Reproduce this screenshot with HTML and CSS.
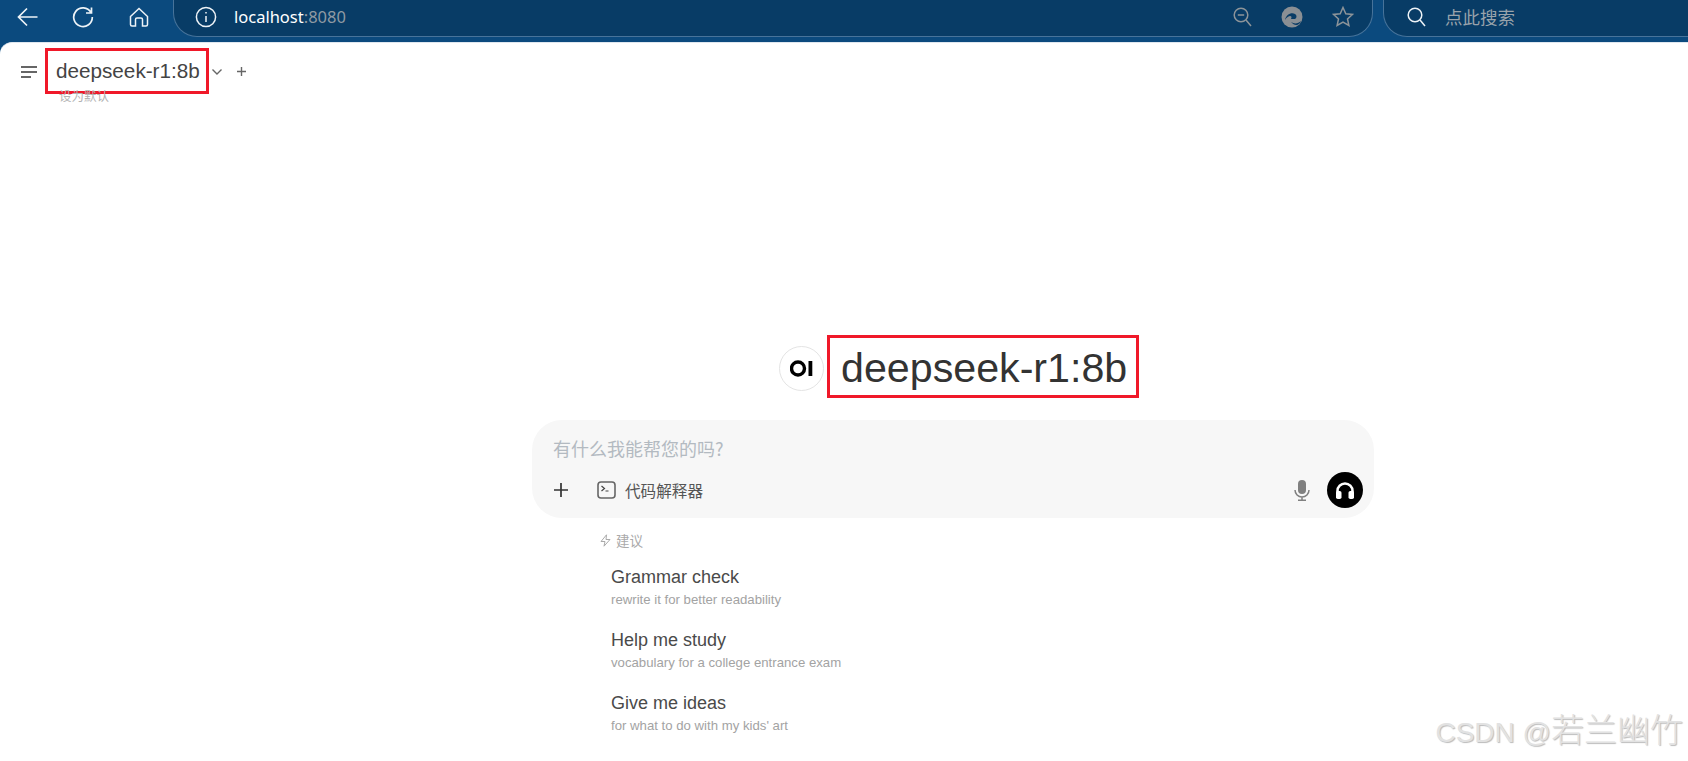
FILE: index.html
```html
<!DOCTYPE html>
<html lang="zh">
<head>
<meta charset="utf-8">
<title>Open WebUI</title>
<link rel="stylesheet" href="styles.css">
</head>
<body>
<div class="toolbar">
  <button class="tb-btn back"><svg width="22" height="20" viewBox="0 0 22 20"><path d="M20.500 10H1.500M10 1.500 1.500 10l8.500 8.500" class="line-w"/></svg></button>
  <button class="tb-btn reload"><svg width="22" height="22" viewBox="0 0 22 22"><path d="M19 6.500A9.300 9.300 0 1 0 20.300 11M19.500 1.500v5.500H14" class="line-w"/></svg></button>
  <button class="tb-btn home"><svg width="20" height="20" viewBox="0 0 20 20"><path d="M1.500 9.500 10 1.500l8.500 8v8a1.500 1.500 0 0 1-1.500 1.500h-3.500v-6.500a1.500 1.500 0 0 0-1.500-1.500H8a1.500 1.500 0 0 0-1.500 1.500V19H3a1.500 1.500 0 0 1-1.500-1.500z" class="line-w thin"/></svg></button>
  <div class="addr">
    <svg class="info" width="22" height="22" viewBox="0 0 22 22"><circle cx="11" cy="11" r="9.600" class="line-w thin"/><path d="M11 10v6M11 6v1.600" class="line-w thin"/></svg>
    <span class="url">localhost<span class="port">:8080</span></span>
    <span class="addr-icons">
      <svg width="19" height="20" viewBox="0 0 19 20"><circle cx="8" cy="8" r="6.800" class="line-g"/><path d="M4.800 8h6.400M13 13l5 6" class="line-g"/></svg>
      <svg width="22" height="22" viewBox="0 0 22 22"><circle cx="11" cy="11" r="10.500" fill="#8a8f94"/><path d="M4 14c1-5 6-8 10-6 2 1 2 4 0 5h-4c2-3-2-5-6 1zM10 16c3 2 7 2 10-1-1 4-6 6-10 1z" fill="#0a3c66"/></svg>
      <svg width="22" height="21" viewBox="0 0 22 21"><path d="M11 1.500l2.800 6.200 6.700.7-5 4.500 1.400 6.600L11 16.100l-5.900 3.400 1.400-6.600-5-4.500 6.700-.7z" class="line-g"/></svg>
    </span>
  </div>
  <div class="search">
    <svg width="19" height="20" viewBox="0 0 19 20"><circle cx="8" cy="8" r="6.800" class="line-w thin"/><path d="M13 13l5 6" class="line-w thin"/></svg>
    <span class="search-text">点此搜索</span>
  </div>
</div>

<main class="page">
  <header class="topbar">
    <div class="topbar-row">
      <svg class="menu" width="18" height="14" viewBox="0 0 18 14"><path d="M1 2h16M1 7h16M1 12h10" class="line-d"/></svg>
      <span class="mark model-name">deepseek-r1:8b</span>
      <svg class="chev" width="12" height="8" viewBox="0 0 12 8"><path d="M1.500 1.500 6 6l4.500-4.500" class="line-d thin2"/></svg>
      <span class="add">
        <svg width="9" height="9" viewBox="0 0 9 9"><path d="M4.500 0v9M0 4.500h9" class="line-d thin2"/></svg>
      </span>
    </div>
    <div class="set-default">设为默认</div>
  </header>

  <section class="center">
    <div class="hero">
      <span class="logo"><svg width="24" height="17" viewBox="0 0 24 17"><circle cx="8" cy="8.500" r="6.500" fill="none" stroke="#000" stroke-width="3.400"/><rect x="18.500" y="1" width="3.800" height="15" fill="#000"/></svg></span>
      <h1 class="mark hero-title">deepseek-r1:8b</h1>
    </div>

    <div class="composer">
      <div class="placeholder">有什么我能帮您的吗?</div>
      <div class="composer-row">
        <svg class="c-plus" width="14" height="14" viewBox="0 0 14 14"><path d="M7 0v14M0 7h14" stroke="#333" stroke-width="1.700" fill="none"/></svg>
        <svg class="c-term" width="19" height="18" viewBox="0 0 19 18"><rect x="1" y="1" width="17" height="16" rx="3" fill="none" stroke="#666" stroke-width="1.600"/><path d="M4.500 5l3 2.500-3 2.500M8.500 10h3" fill="none" stroke="#444" stroke-width="1.200"/></svg>
        <span class="c-label">代码解释器</span>
        <svg class="c-mic" width="16" height="21" viewBox="0 0 16 21"><rect x="4" y="0" width="8" height="14" rx="4" fill="#808080"/><path d="M1 10a7 7 0 0 0 14 0M8 17v3M4 20.200h8" fill="none" stroke="#808080" stroke-width="1.500"/></svg>
        <span class="c-call"><svg width="22" height="20" viewBox="0 0 22 20"><path d="M3.500 17v-6a7.500 7.500 0 0 1 15 0v6" fill="none" stroke="#fff" stroke-width="2.600"/><rect x="2" y="11" width="5.500" height="8" rx="1.800" fill="#fff"/><rect x="14.500" y="11" width="5.500" height="8" rx="1.800" fill="#fff"/></svg></span>
      </div>
    </div>

    <div class="suggest">
      <div class="suggest-head">
        <svg width="11" height="13" viewBox="0 0 11 13"><path d="M6.500 .8 1 7.500h4L4 12.200 10 5.500H6z" fill="none" stroke="#aaa" stroke-width="1"/></svg>
        <span>建议</span>
      </div>
      <div class="s-item"><div class="s-title">Grammar check</div><div class="s-sub">rewrite it for better readability</div></div>
      <div class="s-item"><div class="s-title">Help me study</div><div class="s-sub">vocabulary for a college entrance exam</div></div>
      <div class="s-item"><div class="s-title">Give me ideas</div><div class="s-sub">for what to do with my kids' art</div></div>
    </div>
  </section>

  <div class="watermark">CSDN @<span class="wm-cjk">若兰幽竹</span></div>
</main>
</body>
</html>
```
FILE: styles.css
```css
* { box-sizing: border-box; }
html, body { margin: 0; height: 761px; overflow: hidden; }
body {
  background: #0b4a7e;
  font-family: "Liberation Sans", "Noto Sans CJK SC", sans-serif;
  display: flex;
  flex-direction: column;
}
svg { display: block; flex: none; }
.line-w { fill: none; stroke: #eef3f7; stroke-width: 1.700; }
.line-w.thin { stroke-width: 1.500; }
.line-g { fill: none; stroke: #8d9499; stroke-width: 1.500; }
.line-d { fill: none; stroke: #666; stroke-width: 1.800; }
.line-d.thin2 { stroke-width: 1.400; }

.toolbar {
  height: 42px;
  flex: none;
  display: flex;
  align-items: flex-start;
  padding-left: 17px;
}
.tb-btn {
  border: 0;
  background: none;
  padding: 0;
  height: 34px;
  display: flex;
  align-items: center;
}
.reload { margin-left: 33px; }
.home { margin-left: 35px; }
.addr {
  margin-left: 24px;
  width: 1200px;
  height: 37px;
  background: #083c66;
  border: 1px solid #47739a;
  border-top: 0;
  border-radius: 0 0 24px 24px;
  display: flex;
  align-items: center;
  padding: 0 18px 3px 21px;
}
.url {
  margin-left: 17px;
  color: #fff;
  font-family: "Noto Sans", sans-serif;
  font-size: 16.500px;
}
.port { color: #8f9aa3; }
.addr-icons {
  margin-left: auto;
  display: flex;
  align-items: center;
  gap: 29px;
}
.search {
  margin-left: 10px;
  flex: 1;
  height: 37px;
  background: #083c66;
  border: 1px solid #47739a;
  border-top: 0;
  border-right: 0;
  border-radius: 0 0 0 24px;
  display: flex;
  align-items: center;
  padding: 0 0 3px 23px;
}
.search-text {
  margin-left: 19px;
  color: #99a3ab;
  font-size: 17.500px;
  font-family: "Noto Sans CJK SC", sans-serif;
}

.page {
  flex: 1;
  position: relative;
  background: #fff;
  border-radius: 12px 0 0 0;
  border-top: 1px solid #dfe7ef;
}
.mark {
  border: 3px solid #f01829;
  font-weight: 400;
  margin: 0;
}
.topbar { padding: 5px 0 0 20px; }
.topbar-row { display: flex; align-items: center; height: 46px; }
.menu { margin-top: 1px; }
.model-name {
  margin-left: 7px;
  height: 46px;
  width: 164px;
  padding: 0 0 0 8px;
  display: flex;
  align-items: center;
  font-size: 20.700px;
  color: #444;
  white-space: nowrap;
}
.chev { margin-left: 2px; margin-top: 1px; }
.add { margin-left: 14px; }
.set-default {
  margin: -6px 0 0 39px;
  font-size: 12.500px;
  line-height: 15px;
  color: #b3b3b3;
  font-family: "Noto Sans CJK SC", sans-serif;
}

.center {
  margin: 232px 0 0 532px;
  width: 842px;
}
.hero {
  display: flex;
  align-items: center;
  padding-left: 247px;
}
.logo {
  width: 45px;
  height: 45px;
  border: 1px solid #e4e4e4;
  border-radius: 50%;
  display: flex;
  align-items: center;
  justify-content: center;
  margin-top: 4px;
  margin-right: 3px;
}
.hero-title {
  width: 312px;
  height: 63px;
  padding-left: 11px;
  font-size: 41.200px;
  line-height: 60px;
  color: #333;
  white-space: nowrap;
}
.composer {
  margin-top: 22px;
  height: 98px;
  background: #f7f7f7;
  border-radius: 30px;
  padding: 15px 11px 0 21px;
}
.placeholder {
  font-family: "Noto Sans CJK SC", sans-serif;
  font-size: 18px;
  line-height: 26px;
  color: #b3bac1;
}
.composer-row {
  margin-top: 11px;
  height: 36px;
  display: flex;
  align-items: center;
}
.c-plus { margin-left: 1px; }
.c-term { margin-left: 29px; }
.c-label {
  margin-left: 9px;
  font-family: "Noto Sans CJK SC", sans-serif;
  font-size: 15.600px;
  color: #555;
}
.c-mic { margin-left: auto; }
.c-call {
  margin-left: 17px;
  width: 36px;
  height: 36px;
  border-radius: 50%;
  background: #000;
  display: flex;
  align-items: center;
  justify-content: center;
}
.suggest {
  margin: 12px 0 0 68px;
}
.suggest-head {
  display: flex;
  align-items: center;
  gap: 5px;
  font-family: "Noto Sans CJK SC", sans-serif;
  font-size: 13.500px;
  line-height: 20px;
  color: #aaa;
}
.s-item {
  margin-left: 11px;
  height: 63px;
  padding-top: 15px;
}
.s-title {
  font-size: 18px;
  line-height: 24px;
  color: #4a4a4a;
}
.s-sub {
  font-size: 13.200px;
  line-height: 22px;
  color: #a3a3a3;
}
.watermark {
  position: absolute;
  right: 5px;
  bottom: 8px;
  font-size: 28px;
  line-height: 40px;
  color: #e2e2e2;
  text-shadow: 1px 1px 1px #bbb;
  white-space: nowrap;
}
.wm-cjk {
  font-size: 33px;
  font-family: "Noto Sans CJK SC", sans-serif;
  font-weight: 300;
}
```
